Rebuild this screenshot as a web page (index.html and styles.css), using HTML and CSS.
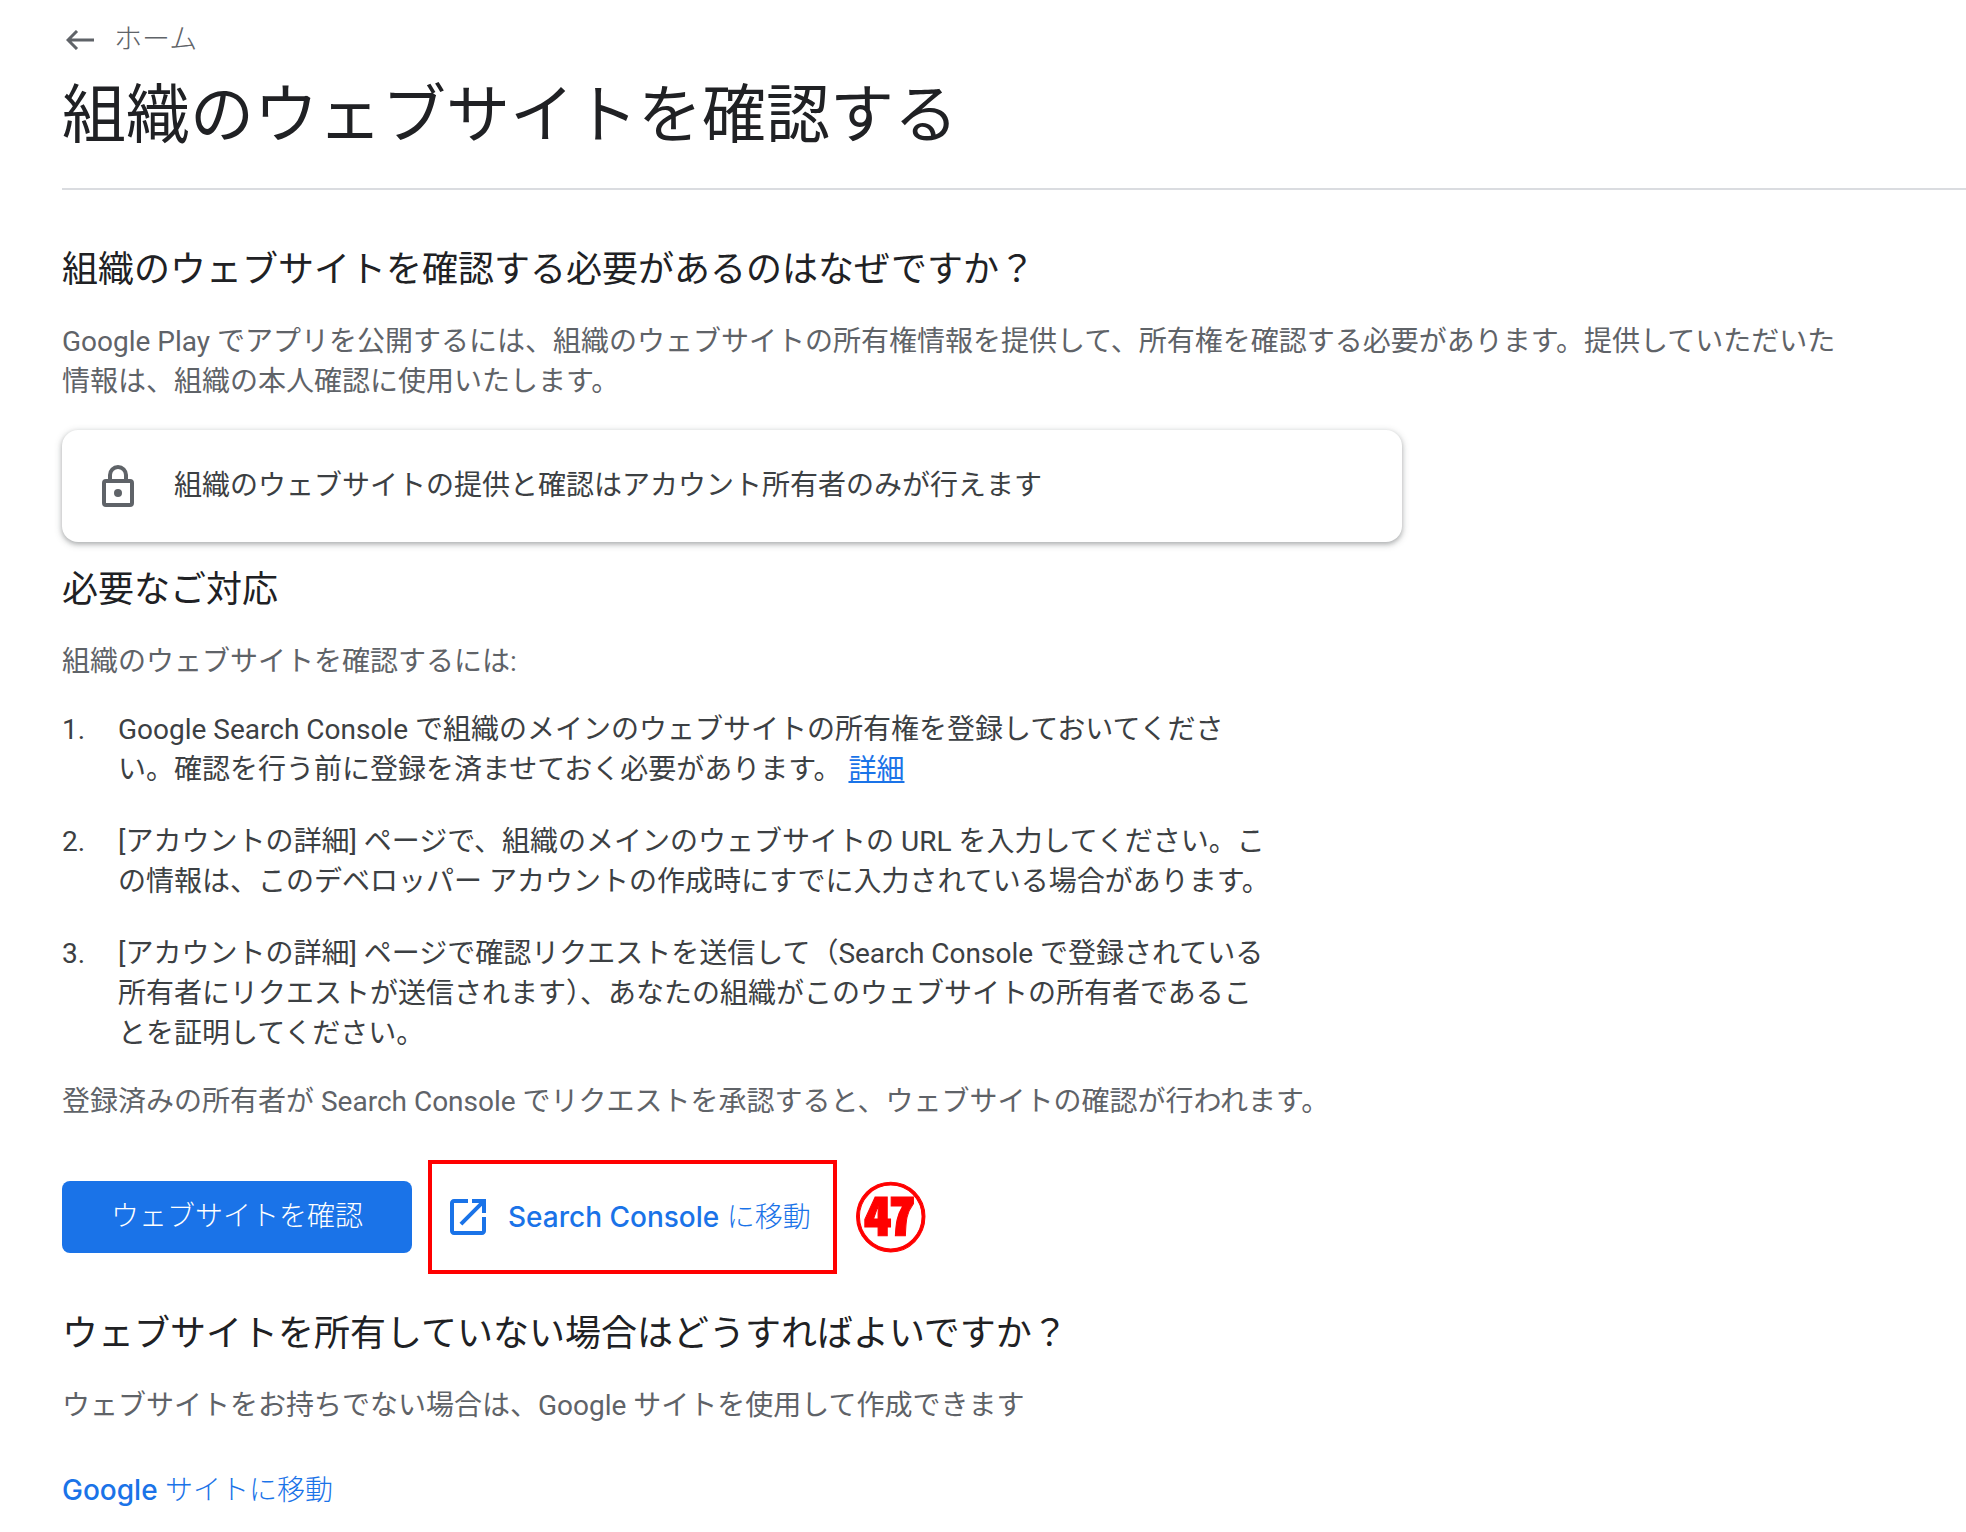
FILE: index.html
```
<!DOCTYPE html>
<html lang="ja">
<head>
    <meta charset="utf-8">
    <meta content="width=device-width,initial-scale=1.0" name="viewport">
    <title>組織のウェブサイトを確認する</title>
    <link rel="stylesheet" href="styles.css">
</head>
<body>
<!--ヘッダー-->
<header class="page-head">
    <a class="back-link" href="#">
        <svg class="back-icon" viewBox="0 0 28 20" aria-hidden="true"><path d="M11 1L2 10l9 9M2 10h26"/></svg>
        ホーム
    </a>
    <h1 class="page-title">組織のウェブサイトを確認する</h1>
</header>
<main class="page-content">
    <section>
        <h2 class="section-title">組織のウェブサイトを確認する必要があるのはなぜですか？</h2>
        <p class="text">Google Play でアプリを公開するには、組織のウェブサイトの所有権情報を提供して、所有権を確認する必要があります。提供していただいた情報は、組織の本人確認に使用いたします。</p>
        <div class="notice">
            <svg class="notice-icon" viewBox="0 0 32 42" aria-hidden="true">
                <rect x="2" y="16" width="28" height="24" rx="2"/>
                <path d="M8 16v-6a8 8 0 0 1 16 0v6"/>
                <circle cx="16" cy="28" r="4"/>
            </svg>
            <p>組織のウェブサイトの提供と確認はアカウント所有者のみが行えます</p>
        </div>
    </section>
    <section>
        <h2 class="section-title">必要なご対応</h2>
        <p class="text">組織のウェブサイトを確認するには:</p>
        <ol class="steps">
            <li>Google Search Console で組織のメインのウェブサイトの所有権を登録しておいてください。確認を行う前に登録を済ませておく必要があります。 <a href="#">詳細</a></li>
            <li>[アカウントの詳細] ページで、組織のメインのウェブサイトの URL を入力してください。この情報は、このデベロッパー アカウントの作成時にすでに入力されている場合があります。</li>
            <li>[アカウントの詳細] ページで確認リクエストを送信して（Search Console で登録されている所有者にリクエストが送信されます）、あなたの組織がこのウェブサイトの所有者であることを証明してください。</li>
        </ol>
        <p class="text">登録済みの所有者が Search Console でリクエストを承認すると、ウェブサイトの確認が行われます。</p>
        <div class="actions">
            <button class="btn-primary" type="button">ウェブサイトを確認</button>
            <div class="highlight">
                <button class="btn-text" type="button">
                    <svg class="open-icon" viewBox="3 3 18 18" aria-hidden="true"><path d="M19 19H5V5h7V3H5c-1.11 0-2 .9-2 2v14c0 1.1.89 2 2 2h14c1.1 0 2-.9 2-2v-7h-2v7zM14 3v2h3.59l-9.83 9.83 1.41 1.41L19 6.41V10h2V3h-7z"/></svg>
                    <span>Search Console <span class="light">に移動</span></span>
                </button>
            </div>
            <span class="step-mark">㊼</span>
        </div>
    </section>
    <section>
        <h2 class="section-title">ウェブサイトを所有していない場合はどうすればよいですか？</h2>
        <p class="text">ウェブサイトをお持ちでない場合は、Google サイトを使用して作成できます</p>
        <a class="site-link" href="#">Google <span class="light">サイトに移動</span></a>
    </section>
</main>
</body>
</html>
```
FILE: styles.css
```
body,p,h1,h2,ol{margin: 0;padding: 0;}
body{
    background: #fff;
    color: #3c4043;
    font-family: Roboto, "Noto Sans CJK JP", sans-serif;
    font-size: 28px;
    line-height: 40px;
}
button{
    border: none;
    background: none;
    font: inherit;
}
.page-head{
    margin-left: 62px;
    padding: 20px 0 32px;
    border-bottom: 2px solid #dadce0;
}
.back-link{
    display: inline-flex;
    align-items: center;
    gap: 20px;
    padding-left: 4px;
    color: #5f6368;
    font-weight: 300;
    text-decoration: none;
}
.back-icon{
    width: 28px;
    height: 20px;
    fill: none;
    stroke: #5f6368;
    stroke-width: 3;
}
.page-title{
    margin-top: 15px;
    color: #202124;
    font-size: 64px;
    font-weight: 400;
    line-height: 80px;
}
.page-content{
    padding: 56px 120px 24px 62px;
}
.section-title{
    margin-bottom: 28px;
    color: #202124;
    font-size: 36px;
    font-weight: 400;
    line-height: 48px;
}
.text{color: #5f6368;}
.notice{
    display: flex;
    align-items: center;
    gap: 40px;
    box-sizing: border-box;
    max-width: 1340px;
    min-height: 112px;
    margin: 28px 0 24px;
    padding: 0 40px;
    border-radius: 16px;
    box-shadow: 0 2px 4px rgba(60,64,67,.3), 0 2px 6px 2px rgba(60,64,67,.15);
}
.notice-icon{
    width: 32px;
    height: 42px;
    fill: none;
    stroke: #5f6368;
    stroke-width: 4;
}
.notice-icon circle{
    fill: #5f6368;
    stroke: none;
}
.steps{
    display: grid;
    gap: 32px;
    max-width: 1208px;
    margin: 28px 0;
    list-style: none;
    counter-reset: step;
}
.steps li{
    position: relative;
    padding-left: 56px;
    counter-increment: step;
}
.steps li:before{
    content: counter(step) ".";
    position: absolute;
    left: 0;
}
.steps a{color: #1a73e8;}
.actions{
    display: flex;
    align-items: center;
    flex-wrap: wrap;
    margin: 38px 0 36px;
}
.btn-primary{
    height: 72px;
    padding: 0 49px;
    border-radius: 8px;
    background: #1a73e8;
    color: #fff;
    font-weight: 300;
}
.highlight{
    margin: 0 18px 0 16px;
    border: 4px solid #f00;
}
.btn-text{
    display: flex;
    align-items: center;
    gap: 22px;
    height: 106px;
    padding: 0 22px 0 18px;
    color: #1a73e8;
    font-weight: 500;
}
.btn-text,.site-link{font-family: Inter, "Noto Sans CJK JP", sans-serif;}
.light{font-weight: 300;}
.open-icon{
    width: 36px;
    height: 36px;
    fill: #1a73e8;
}
.step-mark{
    padding-bottom: 8px;
    color: #f00;
    font-family: "Noto Sans CJK JP", sans-serif;
    font-size: 72px;
    font-weight: 900;
    line-height: 80px;
    -webkit-text-stroke: 1px #f00;
}
.site-link{
    display: inline-block;
    margin-top: 44px;
    color: #1a73e8;
    font-weight: 500;
    text-decoration: none;
}
```
